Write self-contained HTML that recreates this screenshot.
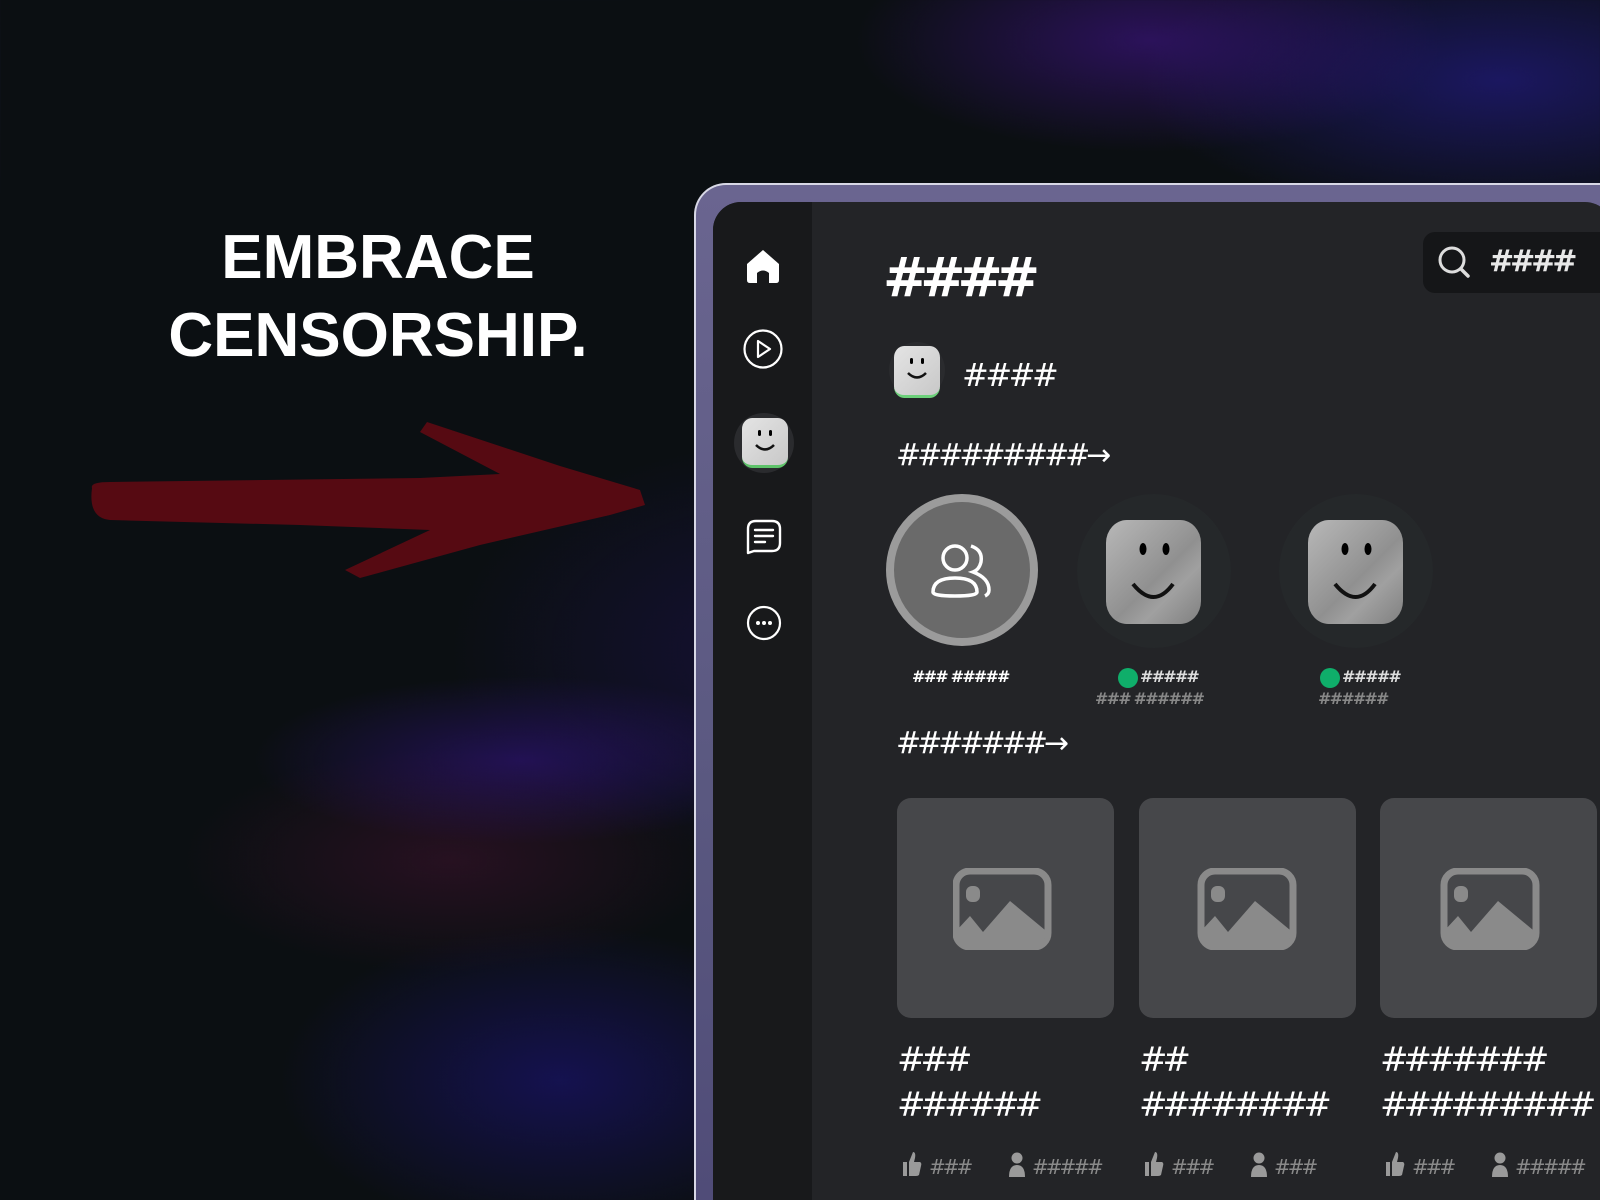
<!DOCTYPE html>
<html><head><meta charset="utf-8"><style>
*{margin:0;padding:0;box-sizing:border-box}
html,body{width:1600px;height:1200px;overflow:hidden}
body{position:relative;font-family:"Liberation Sans",sans-serif;
background:
radial-gradient(ellipse 420px 160px at 1150px 40px,rgba(70,20,150,.55),transparent 70%),
radial-gradient(ellipse 520px 200px at 1500px 80px,rgba(40,30,160,.55),transparent 70%),
radial-gradient(ellipse 380px 120px at 520px 760px,rgba(60,20,160,.45),transparent 70%),
radial-gradient(ellipse 380px 160px at 450px 860px,rgba(90,20,60,.35),transparent 70%),
radial-gradient(ellipse 400px 220px at 560px 1080px,rgba(30,20,140,.5),transparent 70%),
radial-gradient(ellipse 500px 300px at 800px 650px,rgba(40,20,120,.35),transparent 70%),
#0b0f12}
.hl{position:absolute;left:0;width:756px;text-align:center;color:#fff;font-weight:bold;font-size:62px}
.frame{position:absolute;left:694px;top:183px;width:940px;height:1017px;border-radius:32px 32px 0 0;border:2px solid #d8d8e6;border-bottom:none;background:linear-gradient(180deg,#6a6590,#5a5880 60%,#504c78)}
.win{position:absolute;left:713px;top:202px;width:900px;height:998px;border-radius:28px 28px 0 0;background:#232427;overflow:hidden}
.side{position:absolute;left:0;top:0;width:99px;height:100%;background:#18191b}
.t{position:absolute;color:#fff;font-family:"DejaVu Sans",sans-serif;font-weight:bold;white-space:nowrap}
.face{position:absolute;border-radius:22%;background:linear-gradient(135deg,#b8b8b8,#909090 55%,#a0a0a0 70%,#808080)}
.card{position:absolute;top:596px;width:217px;height:220px;border-radius:14px;background:#46474a}
</style></head><body>
<div class="hl" style="top:222px">EMBRACE</div>
<div class="hl" style="top:300px">CENSORSHIP.</div>
<svg style="position:absolute;left:0;top:0" width="700" height="650">
<path d="M92 488 Q90 482 110 482 L420 478 L500 474 L420 432 L427 422 L560 466 L640 490 L645 505 L610 515 L480 545 L360 578 L345 570 L430 530 L300 525 L110 520 Q88 518 92 488Z" fill="#560a12"/>
</svg>
<div class="frame"></div>
<div class="win">
<div class="side">
<svg style="position:absolute;left:30px;top:44px" width="40" height="40" viewBox="0 0 40 40"><path d="M4 18 L20 4 L36 18 L36 34 Q36 37 33 37 L26 37 L26 27 Q20 22 14 27 L14 37 L7 37 Q4 37 4 34Z" fill="#fff"/></svg>
<svg style="position:absolute;left:29px;top:126px" width="42" height="42" viewBox="0 0 42 42"><circle cx="21" cy="21" r="18.5" fill="none" stroke="#fff" stroke-width="2.2"/><path d="M16 13 L28 21 L16 29Z" fill="none" stroke="#fff" stroke-width="2.2" stroke-linejoin="round"/></svg>
<div style="position:absolute;left:21px;top:211px;width:60px;height:60px;border-radius:50%;background:#2a2b2e"></div>
<div class="face" style="left:29px;top:216px;width:46px;height:50px;border-bottom:3px solid #5ec36a;background:linear-gradient(135deg,#e4e4e4,#c8c8c8)"><svg width="46" height="46" viewBox="0 0 46 46"><rect x="16" y="12" width="3" height="6" rx="1.5"/><rect x="27" y="12" width="3" height="6" rx="1.5"/><path d="M14 27 Q23 36 32 27" fill="none" stroke="#111" stroke-width="2.5"/></svg></div>
<svg style="position:absolute;left:31px;top:314px" width="40" height="40" viewBox="0 0 40 40"><path d="M4 37 L4 13 Q4 5 12 5 L28 5 Q36 5 36 13 L36 27 Q36 35 28 35 L10 35 L4 37Z" fill="none" stroke="#fff" stroke-width="2.4" stroke-linejoin="round"/><path d="M11 14H29M11 20H29M11 26H21" stroke="#fff" stroke-width="2.4" stroke-linecap="round"/></svg>
<svg style="position:absolute;left:32px;top:402px" width="38" height="38" viewBox="0 0 38 38"><circle cx="19" cy="19" r="16" fill="none" stroke="#fff" stroke-width="2.2"/><circle cx="13" cy="19" r="2" fill="#fff"/><circle cx="19" cy="19" r="2" fill="#fff"/><circle cx="25" cy="19" r="2" fill="#fff"/></svg>
</div>
<div class="t" style="left:170px;top:44px;font-size:54px;letter-spacing:-8px">####</div>
<div style="position:absolute;left:710px;top:30px;width:200px;height:61px;border-radius:12px;background:#151618"></div>
<svg style="position:absolute;left:724px;top:43px" width="36" height="36" viewBox="0 0 36 36"><circle cx="15" cy="15" r="12" fill="none" stroke="#ddd" stroke-width="3"/><path d="M24 24 L31 31" stroke="#ddd" stroke-width="3.5" stroke-linecap="round"/></svg>
<div class="t" style="left:776px;top:42px;font-size:30px;letter-spacing:-4px;color:#e8e8e8">####</div>
<div style="position:absolute;left:176px;top:140px;width:56px;height:56px;border-radius:50%;background:#2a2b2e"></div>
<div class="face" style="left:181px;top:144px;width:46px;height:52px;border-bottom:3px solid #6cd07a;background:linear-gradient(135deg,#e4e4e4,#c8c8c8)"><svg width="46" height="46" viewBox="0 0 46 46"><rect x="16" y="12" width="3" height="6" rx="1.5"/><rect x="27" y="12" width="3" height="6" rx="1.5"/><path d="M14 27 Q23 36 32 27" fill="none" stroke="#111" stroke-width="2.5"/></svg></div>
<div class="t" style="left:249px;top:154px;font-size:32px;letter-spacing:-3.5px;font-weight:normal">####</div>
<div class="t" style="left:183px;top:236px;font-size:30px;letter-spacing:-4px;font-weight:normal">#########<span style="letter-spacing:0">→</span></div>
<div style="position:absolute;left:173px;top:292px;width:152px;height:152px;border-radius:50%;background:#6a6a6a;border:8px solid #9b9b9b"></div>
<svg style="position:absolute;left:212px;top:340px" width="76" height="60" viewBox="0 0 76 60"><circle cx="30" cy="16" r="12" fill="none" stroke="#fff" stroke-width="3.5"/><path d="M8 50 Q8 36 30 36 Q52 36 52 50 Q52 54 30 54 Q8 54 8 50Z" fill="none" stroke="#fff" stroke-width="3.5"/><path d="M46 4 Q58 8 56 20 Q54 28 48 30 Q64 36 64 48 Q64 52 60 54" fill="none" stroke="#fff" stroke-width="3.5"/></svg>
<div class="t" style="left:199px;top:465px;font-size:16px;letter-spacing:-1.8px">### #####</div>
<div style="position:absolute;left:364px;top:292px;width:154px;height:154px;border-radius:50%;background:#25282a"></div>
<div class="face" style="left:393px;top:318px;width:95px;height:104px"><svg width="95" height="104" viewBox="0 0 95 104"><ellipse cx="37" cy="29" rx="3.5" ry="6"/><ellipse cx="60" cy="29" rx="3.5" ry="6"/><path d="M27 64 Q48 90 67 64" fill="none" stroke="#111" stroke-width="4"/></svg></div>
<div style="position:absolute;left:405px;top:466px;width:20px;height:20px;border-radius:50%;background:#0fae6a"></div>
<div class="t" style="left:427px;top:465px;font-size:16px;letter-spacing:-1.8px;color:#ddd">#####</div>
<div class="t" style="left:382px;top:487px;font-size:16px;letter-spacing:-1.8px;color:#888">### ######</div>
<div style="position:absolute;left:566px;top:292px;width:154px;height:154px;border-radius:50%;background:#25282a"></div>
<div class="face" style="left:595px;top:318px;width:95px;height:104px"><svg width="95" height="104" viewBox="0 0 95 104"><ellipse cx="37" cy="29" rx="3.5" ry="6"/><ellipse cx="60" cy="29" rx="3.5" ry="6"/><path d="M27 64 Q48 90 67 64" fill="none" stroke="#111" stroke-width="4"/></svg></div>
<div style="position:absolute;left:607px;top:466px;width:20px;height:20px;border-radius:50%;background:#0fae6a"></div>
<div class="t" style="left:629px;top:465px;font-size:16px;letter-spacing:-1.8px;color:#ddd">#####</div>
<div class="t" style="left:605px;top:487px;font-size:16px;letter-spacing:-1.8px;color:#888">######</div>
<div class="t" style="left:183px;top:524px;font-size:30px;letter-spacing:-4px;font-weight:normal">#######<span style="letter-spacing:0">→</span></div>
<div class="card" style="left:184px"></div>
<div class="card" style="left:426px"></div>
<div class="card" style="left:667px"></div>
<svg style="position:absolute;left:240px;top:666px" width="740" height="82"><defs><g id="im"><rect x="3" y="3" width="92" height="76" rx="14" fill="none" stroke="#8a8a8a" stroke-width="7"/><path d="M4 62 L17 48 L30 64 L57 33 L92 62 L92 66 Q92 78 80 78 L18 78 Q4 78 4 66Z" fill="#8a8a8a"/><rect x="13" y="18" width="14" height="16" rx="6" fill="#8a8a8a"/></g></defs><use href="#im" x="0"/><use href="#im" x="245"/><use href="#im" x="488"/></svg>
<div class="t" style="left:184px;top:836px;font-size:34px;letter-spacing:-5px;line-height:45px;font-weight:normal">###<br>######</div>
<div class="t" style="left:426px;top:836px;font-size:34px;letter-spacing:-5px;line-height:45px;font-weight:normal">##<br>########</div>
<div class="t" style="left:667px;top:836px;font-size:34px;letter-spacing:-5px;line-height:45px;font-weight:normal">#######<br>#########</div>
<svg style="position:absolute;left:188px;top:948px" width="720" height="30"><defs><g id="st"><path d="M2 12 L6 12 L6 26 L2 26Z M8 12 L12 2 Q15 2 14 8 L13 12 L19 12 Q21 13 20 16 L18 25 Q17 26 15 26 L8 26Z" fill="#9a9a9a"/><text x="28" y="24" font-family="DejaVu Sans" font-size="20" letter-spacing="-3" fill="#8a8a8a">###</text><circle cx="116" cy="8" r="5.5" fill="#9a9a9a"/><path d="M108 27 Q108 15 116 15 Q124 15 124 27Z" fill="#9a9a9a"/></g></defs><use href="#st" x="0"/><use href="#st" x="242"/><use href="#st" x="483"/><g font-family="DejaVu Sans" font-size="20" letter-spacing="-3" fill="#8a8a8a"><text x="131" y="24">#####</text><text x="373" y="24">###</text><text x="614" y="24">#####</text></g></svg>
</div>
</body></html>
